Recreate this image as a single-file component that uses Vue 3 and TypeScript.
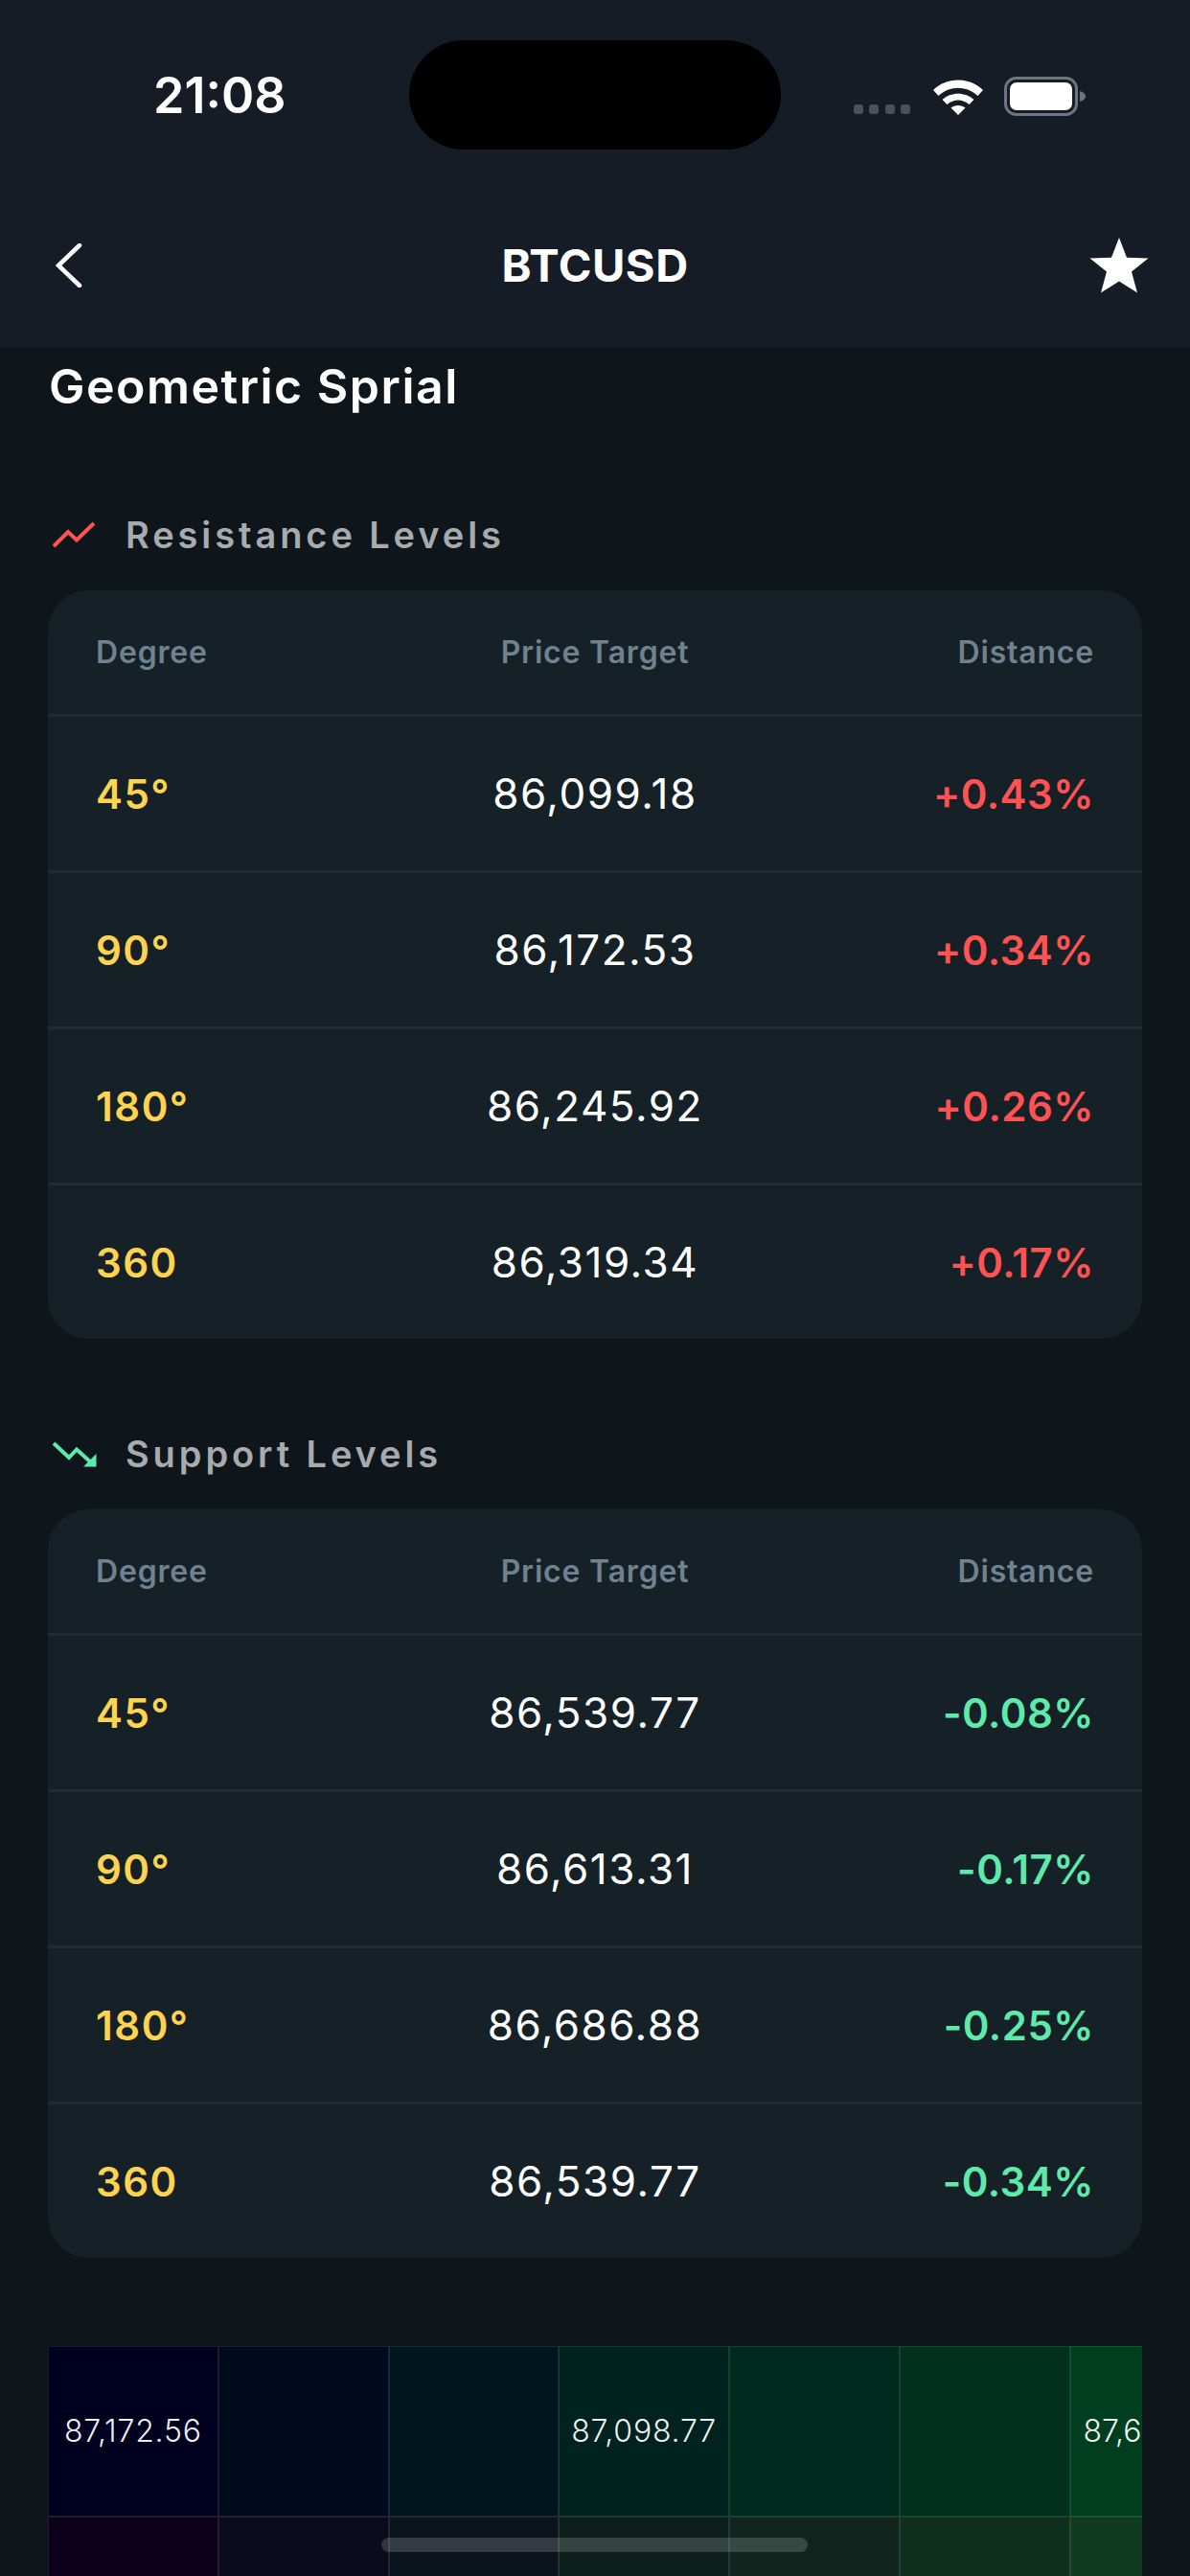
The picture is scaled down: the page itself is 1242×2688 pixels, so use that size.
<script setup lang="ts">
interface Row { degree: string; price: string; distance: string }
interface Section { title: string; tone: 'up' | 'down'; rows: Row[] }

const sections: Section[] = [
  {
    title: 'Resistance Levels',
    tone: 'up',
    rows: [
      { degree: '45°', price: '86,099.18', distance: '+0.43%' },
      { degree: '90°', price: '86,172.53', distance: '+0.34%' },
      { degree: '180°', price: '86,245.92', distance: '+0.26%' },
      { degree: '360', price: '86,319.34', distance: '+0.17%' },
    ],
  },
  {
    title: 'Support Levels',
    tone: 'down',
    rows: [
      { degree: '45°', price: '86,539.77', distance: '-0.08%' },
      { degree: '90°', price: '86,613.31', distance: '-0.17%' },
      { degree: '180°', price: '86,686.88', distance: '-0.25%' },
      { degree: '360', price: '86,539.77', distance: '-0.34%' },
    ],
  },
]

const heat: { bg: string; label: string; cut?: boolean }[][] = [
  [
    { bg: '#00001f', label: '87,172.56' },
    { bg: '#000a1e', label: '' },
    { bg: '#00151e', label: '' },
    { bg: '#00231f', label: '87,098.77' },
    { bg: '#012a1f', label: '' },
    { bg: '#01301d', label: '' },
    { bg: '#003e20', label: '87,6', cut: true },
  ],
  [
    { bg: '#0c001b', label: '' },
    { bg: '#0a0b1c', label: '' },
    { bg: '#0b141c', label: '' },
    { bg: '#0d1f1b', label: '' },
    { bg: '#0f251d', label: '' },
    { bg: '#0e2e1e', label: '' },
    { bg: '#0f3a1f', label: '' },
  ],
]
</script>

<template>
  <div class="screen">
    <header class="top">
      <div class="status">
        <span class="time">21:08</span>
        <div class="status-icons">
          <div class="dots"><i></i><i></i><i></i><i></i></div>
          <svg class="wifi" width="54" height="39" viewBox="0 0 54 39">
            <path d="M1 13 C15 -1 39 -1 53 13 L47.500 19 C36 8 18 8 6.500 19 Z" fill="#fff" />
            <path d="M10.500 23 C19 14.500 35 14.500 43.500 23 L38.500 28 C31.500 22 22.500 22 15.500 28 Z" fill="#fff" />
            <path d="M19.500 31.500 C23.500 28 30.500 28 34.500 31.500 L27 39 Z" fill="#fff" />
          </svg>
          <svg class="battery" width="86" height="41" viewBox="0 0 86 41">
            <rect x="1.500" y="1.500" width="74" height="38" rx="11" fill="none" stroke="#6f747e" stroke-width="3" />
            <rect x="6" y="6" width="65" height="29" rx="7" fill="#fff" />
            <path d="M79 15 C83 16 85 18 85 20.500 C85 23 83 25 79 26 Z" fill="#6f747e" />
          </svg>
        </div>
        <div class="island"></div>
      </div>
      <nav class="nav">
        <svg class="back" width="28" height="46" viewBox="0 0 28 46">
          <path d="M25 2 L3 23 L25 44" fill="none" stroke="#fff" stroke-width="4.500" stroke-linecap="round" stroke-linejoin="miter" />
        </svg>
        <h1 class="symbol">BTCUSD</h1>
        <svg class="star" width="62" height="58" viewBox="0 0 62 58">
          <path d="M31 0 L39 20.800 L61.500 21.500 L44 35.500 L50 57.500 L31 45.500 L12 57.500 L18 35.500 L0.500 21.500 L23 20.800 Z" fill="#fff" />
        </svg>
      </nav>
    </header>

    <main class="content">
      <h2 class="page-title">Geometric Sprial</h2>

      <section v-for="s in sections" :key="s.title" class="section">
        <div class="section-head">
          <svg v-if="s.tone === 'up'" width="50" height="30" viewBox="0 0 50 30">
            <path d="M3 27 L18 12 L27 20.500 L45 3" fill="none" stroke="#ff5252" stroke-width="4" />
          </svg>
          <svg v-else width="50" height="30" viewBox="0 0 50 30">
            <path d="M3 4 L19 19 L27 10.500 L42 24" fill="none" stroke="#5eeaaa" stroke-width="4" />
            <path d="M47.500 15 V28.500 H34 Z" fill="#5eeaaa" />
          </svg>
          <span class="section-title">{{ s.title }}</span>
        </div>
        <div class="card">
          <div class="row head">
            <span>Degree</span>
            <span class="mid">Price Target</span>
            <span class="end">Distance</span>
          </div>
          <div v-for="(r, i) in s.rows" :key="i" class="row body">
            <span class="degree">{{ r.degree }}</span>
            <span class="mid price">{{ r.price }}</span>
            <span class="end distance" :class="s.tone">{{ r.distance }}</span>
          </div>
        </div>
      </section>

      <div class="heat">
        <div v-for="(line, y) in heat" :key="y" class="heat-row">
          <div
            v-for="(c, x) in line"
            :key="x"
            class="heat-cell"
            :class="{ cut: c.cut }"
            :style="{ background: c.bg }"
          >
            <span v-if="c.label">{{ c.label }}</span>
          </div>
        </div>
      </div>
    </main>

    <div class="home"></div>
  </div>
</template>

<style>
html, body { margin: 0; background: #0e151b; }
</style>

<style scoped>
.screen {
  position: relative;
  width: 1242px;
  height: 2688px;
  overflow: hidden;
  display: flex;
  flex-direction: column;
  background: #0e151b;
  color: #fff;
  font-family: Inter, "Liberation Sans", sans-serif;
}
.top { height: 362px; background: #161c26; flex: none; }
.status {
  position: relative;
  height: 200px;
  box-sizing: border-box;
  padding: 72px 108px 0 160px;
  display: flex;
  justify-content: space-between;
  align-items: flex-start;
}
.time { font-size: 52px; font-weight: 600; line-height: 56px; letter-spacing: 0; }
.status-icons { display: flex; align-items: flex-end; margin-top: 8px; height: 41px; }
.dots { display: flex; gap: 6.500px; margin-right: 23px; margin-bottom: 2px; }
.dots i { width: 10px; height: 10px; border-radius: 3px; background: #4b505a; }
.wifi { margin-right: 21px; margin-bottom: 1px; }
.battery { display: block; }
.island {
  position: absolute;
  left: 427px;
  top: 42px;
  width: 388px;
  height: 114px;
  border-radius: 57px;
  background: #000;
}
.nav {
  height: 162px;
  box-sizing: border-box;
  padding: 0 43px;
  display: grid;
  grid-template-columns: 1fr auto 1fr;
  align-items: center;
  margin-top: -4px;
}
.back { margin-left: 15px; }
.star { justify-self: end; }
.symbol { margin: 0; font-size: 47px; font-weight: 700; line-height: 56px; letter-spacing: 0.500px; }
.content {
  flex: 1;
  min-height: 0;
  padding: 0 50px;
  display: flex;
  flex-direction: column;
}
.page-title {
  margin: 11px 0 0;
  padding-left: 1px;
  font-size: 50px;
  font-weight: 600;
  line-height: 60px;
  letter-spacing: 1.500px;
}
.section { margin-top: 110px; }
.section + .section { margin-top: 105px; }
.section-head { display: flex; align-items: center; height: 30px; gap: 28px; padding-left: 3px; }
.section-head svg { flex: none; }
.section-title { font-size: 38px; font-weight: 600; color: #a8abad; letter-spacing: 3.900px; line-height: 44px; }
.card {
  margin-top: 43px;
  border-radius: 42px;
  background: #152027;
  overflow: hidden;
}
.row {
  display: grid;
  grid-template-columns: 1fr 1fr 1fr;
  align-items: center;
  padding: 0 50px;
  border-bottom: 3px solid #212b31;
  box-sizing: border-box;
}
.row:last-child { border-bottom: 0; height: 160px; }
.head { height: 132px; font-size: 32px; font-weight: 600; color: #6e828f; letter-spacing: 0.800px; }
.body { height: 163px; }
.mid { text-align: center; }
.end { text-align: right; }
.degree { font-size: 42px; font-weight: 600; color: #fdd34f; letter-spacing: 1.500px; }
.price { font-size: 44px; font-weight: 400; letter-spacing: 1.500px; }
.distance { font-size: 42px; font-weight: 600; letter-spacing: 0.500px; }
.up { color: #ff5252; }
.down { color: #5eeaaa; }
.heat { margin-top: 92px; overflow: hidden; flex: none; }
.heat-row { display: flex; }
.heat-cell {
  flex: none;
  width: 177.750px;
  height: 177.750px;
  box-sizing: border-box;
  border: 1.500px solid rgba(255, 255, 255, 0.1);
  display: flex;
  align-items: center;
  justify-content: center;
  font-size: 32px;
  font-weight: 300;
  color: rgba(255, 255, 255, 0.95);
  letter-spacing: 0.800px;
  white-space: nowrap;
  overflow: hidden;
}
.heat-cell.cut { justify-content: flex-start; padding-left: 13px; letter-spacing: 0; }
.home {
  position: absolute;
  left: 398px;
  top: 2648px;
  width: 445px;
  height: 15px;
  border-radius: 8px;
  background: rgba(255, 255, 255, 0.17);
}
</style>
